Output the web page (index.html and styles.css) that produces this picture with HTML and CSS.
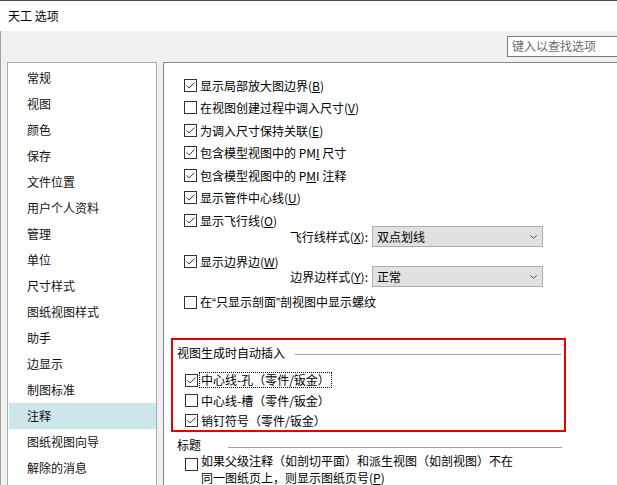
FILE: index.html
```html
<!DOCTYPE html>
<html lang="zh-CN">
<head>
<meta charset="utf-8">
<title>天工 选项</title>
<link rel="stylesheet" href="styles.css">
</head>
<body>
<div class="window">
  <div class="titlebar">天工 选项</div>
  <div class="client">
    <div class="search-row"><div class="search">键入以查找选项</div></div>
    <div class="panels">
      <ul class="nav">
        <li>常规</li>
        <li>视图</li>
        <li>颜色</li>
        <li>保存</li>
        <li>文件位置</li>
        <li>用户个人资料</li>
        <li>管理</li>
        <li>单位</li>
        <li>尺寸样式</li>
        <li>图纸视图样式</li>
        <li>助手</li>
        <li>边显示</li>
        <li>制图标准</li>
        <li class="active">注释</li>
        <li>图纸视图向导</li>
        <li>解除的消息</li>
      </ul>
      <div class="content">
        <div class="cb-row"><svg class="cb" viewBox="0 0 13 13"><rect x="0.5" y="0.5" width="12" height="12" fill="#fff" stroke="#333"/><path d="M2.6 6.4 L5.2 9 L10.4 3.6" fill="none" stroke="#333"/></svg><span class="lbl">显示局部放大图边界(<u>B</u>)</span></div>
        <div class="cb-row"><svg class="cb" viewBox="0 0 13 13"><rect x="0.5" y="0.5" width="12" height="12" fill="#fff" stroke="#333"/></svg><span class="lbl">在视图创建过程中调入尺寸(<u>V</u>)</span></div>
        <div class="cb-row"><svg class="cb" viewBox="0 0 13 13"><rect x="0.5" y="0.5" width="12" height="12" fill="#fff" stroke="#333"/><path d="M2.6 6.4 L5.2 9 L10.4 3.6" fill="none" stroke="#333"/></svg><span class="lbl">为调入尺寸保持关联(<u>E</u>)</span></div>
        <div class="cb-row"><svg class="cb" viewBox="0 0 13 13"><rect x="0.5" y="0.5" width="12" height="12" fill="#fff" stroke="#333"/><path d="M2.6 6.4 L5.2 9 L10.4 3.6" fill="none" stroke="#333"/></svg><span class="lbl">包含模型视图中的 PM<u>I</u> 尺寸</span></div>
        <div class="cb-row"><svg class="cb" viewBox="0 0 13 13"><rect x="0.5" y="0.5" width="12" height="12" fill="#fff" stroke="#333"/><path d="M2.6 6.4 L5.2 9 L10.4 3.6" fill="none" stroke="#333"/></svg><span class="lbl">包含模型视图中的 P<u>M</u>I 注释</span></div>
        <div class="cb-row"><svg class="cb" viewBox="0 0 13 13"><rect x="0.5" y="0.5" width="12" height="12" fill="#fff" stroke="#333"/><path d="M2.6 6.4 L5.2 9 L10.4 3.6" fill="none" stroke="#333"/></svg><span class="lbl">显示管件中心线(<u>U</u>)</span></div>
        <div class="cb-row"><svg class="cb" viewBox="0 0 13 13"><rect x="0.5" y="0.5" width="12" height="12" fill="#fff" stroke="#333"/><path d="M2.6 6.4 L5.2 9 L10.4 3.6" fill="none" stroke="#333"/></svg><span class="lbl">显示飞行线(<u>O</u>)</span></div>
        <div class="sub-row sub-a">
          <span class="sub-label">飞行线样式(<u>X</u>):</span>
          <div class="select"><span>双点划线</span><svg class="chev" viewBox="0 0 7 4"><path d="M0.3 0.3 L3.5 3.5 L6.7 0.3" fill="none" stroke="#555"/></svg></div>
        </div>
        <div class="cb-row row-b"><svg class="cb" viewBox="0 0 13 13"><rect x="0.5" y="0.5" width="12" height="12" fill="#fff" stroke="#333"/><path d="M2.6 6.4 L5.2 9 L10.4 3.6" fill="none" stroke="#333"/></svg><span class="lbl">显示边界边(<u>W</u>)</span></div>
        <div class="sub-row sub-b">
          <span class="sub-label">边界边样式(<u>Y</u>):</span>
          <div class="select"><span>正常</span><svg class="chev" viewBox="0 0 7 4"><path d="M0.3 0.3 L3.5 3.5 L6.7 0.3" fill="none" stroke="#555"/></svg></div>
        </div>
        <div class="cb-row row-c"><svg class="cb" viewBox="0 0 13 13"><rect x="0.5" y="0.5" width="12" height="12" fill="#fff" stroke="#333"/></svg><span class="lbl">在<span class="q">“</span>只显示剖面<span class="q">”</span>剖视图中显示螺纹</span></div>

        <div class="group group-hl">
          <div class="group-title"><span>视图生成时自动插入</span><span class="rule"></span></div>
          <div class="g-item first"><svg class="cb" viewBox="0 0 13 13"><rect x="0.5" y="0.5" width="12" height="12" fill="#fff" stroke="#333"/><path d="M2.6 6.4 L5.2 9 L10.4 3.6" fill="none" stroke="#333"/></svg><span class="lbl focus">中心线-孔（零件/钣金）</span></div>
          <div class="g-item"><svg class="cb" viewBox="0 0 13 13"><rect x="0.5" y="0.5" width="12" height="12" fill="#fff" stroke="#333"/></svg><span class="lbl">中心线-槽（零件/钣金）</span></div>
          <div class="g-item"><svg class="cb" viewBox="0 0 13 13"><rect x="0.5" y="0.5" width="12" height="12" fill="#fff" stroke="#333"/><path d="M2.6 6.4 L5.2 9 L10.4 3.6" fill="none" stroke="#333"/></svg><span class="lbl">销钉符号（零件/钣金）</span></div>
        </div>

        <div class="group group-title-sec">
          <div class="group-title"><span>标题</span><span class="rule wide"></span></div>
          <div class="g-item multi"><svg class="cb" viewBox="0 0 13 13"><rect x="0.5" y="0.5" width="12" height="12" fill="#fff" stroke="#333"/></svg><span class="lbl">如果父级注释（如剖切平面）和派生视图（如剖视图）不在<br>同一图纸页上，则显示图纸页号(<u>P</u>)</span></div>
        </div>
      </div>
    </div>
  </div>
</div>
</body>
</html>
```
FILE: styles.css
```css
html, body {
  margin: 0;
  padding: 0;
}
body {
  width: 617px;
  height: 485px;
  overflow: hidden;
  font-family: "Noto Sans CJK SC", "Noto Sans", sans-serif;
  font-size: 12px;
  color: #000;
  background: #f0f0f0;
}
u {
  text-decoration: underline;
  text-underline-offset: 1px;
}
.q {
  font-family: "Liberation Sans", sans-serif;
}
.window {
  height: 485px;
  display: flex;
  flex-direction: column;
}
.titlebar {
  height: 30px;
  line-height: 29px;
  border-top: 1px solid #4a4a4a;
  background: #fff;
  padding-left: 8px;
  color: #000;
}
.client {
  flex: 1;
  min-height: 0;
  background: #f0f0f0;
  border-left: 1px solid #a0a0a0;
  display: flex;
  flex-direction: column;
}
.search-row {
  display: flex;
  justify-content: flex-end;
  padding-top: 5px;
  margin-right: -12px;
}
.search {
  width: 122px;
  height: 21px;
  box-sizing: border-box;
  border: 1px solid #7a7a7a;
  background: #fff;
  color: #6d6d6d;
  padding-left: 4px;
  line-height: 18px;
}
.panels {
  display: flex;
  gap: 6px;
  margin-top: 5px;
  margin-left: 6px;
  margin-right: -30px;
  height: 440px;
  flex: none;
}
.nav {
  width: 150px;
  flex: none;
  box-sizing: border-box;
  border: 1px solid #ababab;
  background: #fff;
  margin: 0;
  padding: 2px 0 0 1px;
  list-style: none;
}
.nav li {
  height: 26px;
  line-height: 25px;
  padding-left: 18px;
  color: #111;
}
.nav li.active {
  background: #cde6ec;
}
.content {
  flex: 1;
  border: 1px solid #828790;
  background: #fff;
  padding-top: 11px;
}
.cb-row {
  display: flex;
  align-items: center;
  height: 22.5px;
  padding-left: 20px;
}
.cb {
  width: 13px;
  height: 13px;
  flex: none;
  margin-right: 3px;
}
.lbl {
  line-height: 17px;
  white-space: nowrap;
}
.sub-row {
  display: flex;
  align-items: center;
  height: 21px;
}
.sub-a { margin-top: -5.5px; }
.row-b { margin-top: 2.75px; }
.sub-b { margin-top: -6.25px; }
.row-c { margin-top: 3.75px; }
.sub-label {
  width: 204px;
  text-align: right;
  margin-right: 4px;
  line-height: 17px;
  white-space: nowrap;
}
.select {
  width: 171px;
  height: 21px;
  box-sizing: border-box;
  border: 1px solid #adadad;
  background: #e1e1e1;
  display: flex;
  align-items: center;
  justify-content: space-between;
  padding: 0 5px 0 4px;
  line-height: 17px;
}
.chev {
  width: 7px;
  height: 4px;
}
.group {
  box-sizing: border-box;
}
.group-hl {
  margin-top: 24.75px;
  margin-left: 7px;
  width: 395px;
  border: 2px solid #e60000;
  padding: 4px 3px 0 4px;
}
.group-title-sec {
  margin-top: 4px;
  margin-left: 9px;
  width: 392px;
  padding: 0 3px 0 4px;
}
.group-title {
  display: flex;
  align-items: center;
  height: 18px;
  line-height: 18px;
  white-space: nowrap;
}
.rule {
  flex: 1;
  border-top: 1px solid #a0a0a0;
  margin-left: 10px;
  margin-top: 2px;
}
.rule.wide {
  margin-left: 27px;
  margin-top: 4px;
}
.g-item {
  display: flex;
  align-items: center;
  height: 20px;
  padding-left: 8px;
}
.g-item.first {
  margin-top: 8px;
}
.focus {
  border: 1px dotted #000;
  line-height: 14px;
  padding: 0 1px;
  margin-left: -2px;
}
.g-item.multi {
  height: auto;
  align-items: flex-start;
  margin-top: -2px;
}
.g-item.multi .cb {
  margin-top: 6px;
}
```
